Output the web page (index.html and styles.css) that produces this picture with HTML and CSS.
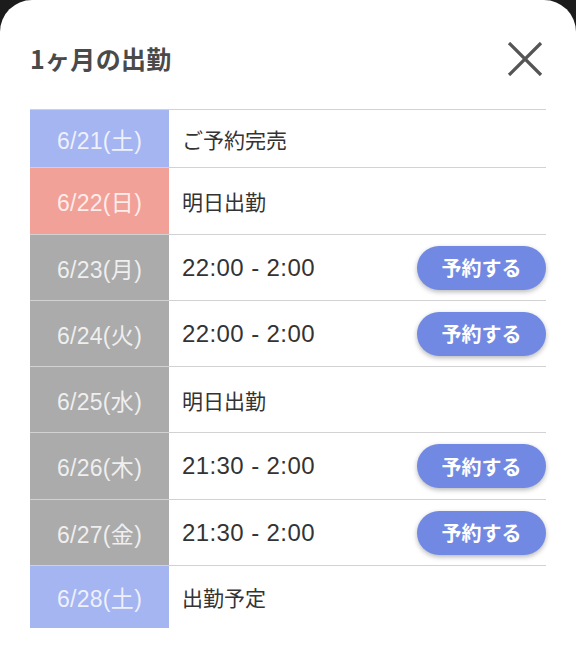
FILE: index.html
```html
<!DOCTYPE html>
<html lang="ja">
<head>
<meta charset="utf-8">
<link rel="stylesheet" href="styles.css">
</head>
<body>
<div class="modal">
  <header class="head">
    <h1 class="title">1ヶ月の出勤</h1>
    <button class="close" aria-label="閉じる">
      <svg width="36" height="34" viewBox="0 0 36 34"><path d="M2 1 L34 33 M34 1 L2 33" stroke="#555" stroke-width="3.3" stroke-linecap="butt" fill="none"/></svg>
    </button>
  </header>
  <div class="table">
    <div class="row first"><div class="date blue">6/21(土)</div><div class="info">ご予約完売</div></div>
    <div class="row tall"><div class="date pink">6/22(日)</div><div class="info">明日出勤</div></div>
    <div class="row"><div class="date gray">6/23(月)</div><div class="info"><span class="time">22:00 - 2:00</span><button class="btn">予約する</button></div></div>
    <div class="row"><div class="date gray">6/24(火)</div><div class="info"><span class="time">22:00 - 2:00</span><button class="btn">予約する</button></div></div>
    <div class="row"><div class="date gray">6/25(水)</div><div class="info">明日出勤</div></div>
    <div class="row tall"><div class="date gray">6/26(木)</div><div class="info"><span class="time">21:30 - 2:00</span><button class="btn">予約する</button></div></div>
    <div class="row"><div class="date gray">6/27(金)</div><div class="info"><span class="time">21:30 - 2:00</span><button class="btn">予約する</button></div></div>
    <div class="row last"><div class="date blue">6/28(土)</div><div class="info">出勤予定</div></div>
  </div>
</div>
</body>
</html>
```
FILE: styles.css
```css
html, body {
  margin: 0;
  padding: 0;
  background: #1c1c1c;
  height: 100%;
}
.modal {
  background: #fff;
  border-radius: 32px 32px 0 0;
  min-height: 666px;
  font-family: "Liberation Sans", "Noto Sans CJK JP", sans-serif;
}
.head {
  height: 109px;
  box-sizing: border-box;
  padding: 6px 30px 0 30px;
  display: flex;
  align-items: center;
  justify-content: space-between;
}
.title {
  margin: 0;
  font-family: "Noto Sans CJK JP", sans-serif;
  font-size: 25px;
  font-weight: 700;
  color: #4a4a4a;
  letter-spacing: 0.3px;
}
.close {
  border: 0;
  background: none;
  padding: 0;
  margin-right: 3px;
  margin-top: 2px;
  display: block;
  line-height: 0;
}
.table {
  margin: 0 30px;
  border-top: 1px solid #d2d2d2;
}
.row {
  display: grid;
  grid-template-columns: 139px 1fr;
  box-sizing: border-box;
  height: 66px;
  border-bottom: 1px solid #d2d2d2;
}
.row.first { height: 58px; }
.row.tall { height: 67px; }
.row.last { height: 62px; border-bottom: 0; }
.date {
  display: flex;
  align-items: center;
  justify-content: center;
  color: rgba(255,255,255,0.82);
  font-size: 23px;
  font-family: "Liberation Sans", "Noto Sans CJK JP", sans-serif;
  letter-spacing: 0.3px;
}
.blue { background: #a5b5f1; }
.pink { background: #f2a199; }
.gray { background: #ababab; }
.info {
  display: flex;
  align-items: center;
  padding-left: 13px;
  color: #333;
  font-size: 21px;
  font-family: "Noto Sans CJK JP", sans-serif;
}
.time {
  font-family: "Liberation Sans", "Noto Sans CJK JP", sans-serif;
  font-size: 24px;
  letter-spacing: 0.4px;
}
.btn {
  margin-left: auto;
  width: 129px;
  height: 44px;
  border: 0;
  border-radius: 22px;
  background: #7189e2;
  color: #fff;
  font-family: "Noto Sans CJK JP", sans-serif;
  font-size: 20px;
  font-weight: 700;
  box-shadow: 0 2px 5px rgba(0,0,0,0.28);
  padding: 0;
}
```
